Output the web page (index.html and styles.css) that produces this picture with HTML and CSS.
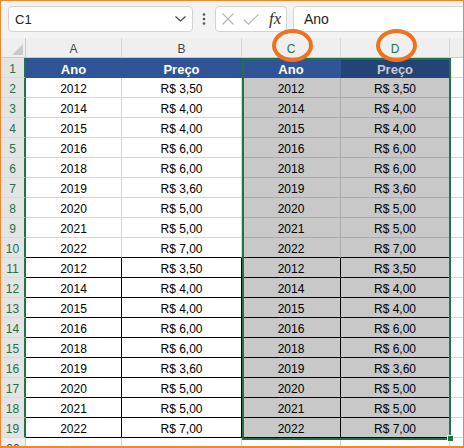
FILE: index.html
```html
<!DOCTYPE html>
<html lang="pt">
<head>
<meta charset="utf-8">
<title>Planilha</title>
<link rel="stylesheet" href="styles.css">
</head>
<body>
<div class="app">
  <div class="fbar">
    <div class="namebox">
      <span class="ref">C1</span>
      <svg class="chev" width="11" height="6" viewBox="0 0 11 6"><path d="M0.5 0.5 L5.5 5 L10.5 0.5" fill="none" stroke="#444" stroke-width="1.2"/></svg>
    </div>
    <div class="dots">
      <svg width="4" height="12" viewBox="0 0 4 12"><circle cx="2" cy="1.5" r="1.3" fill="#555"/><circle cx="2" cy="6" r="1.3" fill="#555"/><circle cx="2" cy="10.5" r="1.3" fill="#555"/></svg>
    </div>
    <div class="fxbox">
      <svg class="ico" width="14" height="12" viewBox="0 0 14 12"><path d="M1.5 0.5 L12.5 11.5 M12.5 0.5 L1.5 11.5" stroke="#b4b4b4" stroke-width="1.1" fill="none"/></svg>
      <svg class="ico" width="16" height="11" viewBox="0 0 16 11"><path d="M0.8 5.5 L5.5 10.2 L15.3 0.6" stroke="#b4b4b4" stroke-width="1.1" fill="none"/></svg>
      <span class="fx">fx</span>
    </div>
    <div class="formula">Ano</div>
  </div>

  <div class="sheet">
    <div class="grid">
      <div class="corner"><svg width="11" height="11" viewBox="0 0 11 11"><path d="M11 0 L11 11 L0 11 Z" fill="#c9c9c9"/></svg></div>
      <div class="ch">A</div><div class="ch">B</div><div class="ch on">C</div><div class="ch on">D</div><div class="ch last"></div>

      <div class="rh on">1</div><div class="c h">Ano</div><div class="c h">Preço</div><div class="c h">Ano</div><div class="c h hs">Preço</div><div class="c e"></div>

      <div class="rh on">2</div><div class="c">2012</div><div class="c">R$ 3,50</div><div class="c s">2012</div><div class="c s">R$ 3,50</div><div class="c e"></div>
      <div class="rh on">3</div><div class="c">2014</div><div class="c">R$ 4,00</div><div class="c s">2014</div><div class="c s">R$ 4,00</div><div class="c e"></div>
      <div class="rh on">4</div><div class="c">2015</div><div class="c">R$ 4,00</div><div class="c s">2015</div><div class="c s">R$ 4,00</div><div class="c e"></div>
      <div class="rh on">5</div><div class="c">2016</div><div class="c">R$ 6,00</div><div class="c s">2016</div><div class="c s">R$ 6,00</div><div class="c e"></div>
      <div class="rh on">6</div><div class="c">2018</div><div class="c">R$ 6,00</div><div class="c s">2018</div><div class="c s">R$ 6,00</div><div class="c e"></div>
      <div class="rh on">7</div><div class="c">2019</div><div class="c">R$ 3,60</div><div class="c s">2019</div><div class="c s">R$ 3,60</div><div class="c e"></div>
      <div class="rh on">8</div><div class="c">2020</div><div class="c">R$ 5,00</div><div class="c s">2020</div><div class="c s">R$ 5,00</div><div class="c e"></div>
      <div class="rh on">9</div><div class="c">2021</div><div class="c">R$ 5,00</div><div class="c s">2021</div><div class="c s">R$ 5,00</div><div class="c e"></div>
      <div class="rh on">10</div><div class="c bb">2022</div><div class="c bb">R$ 7,00</div><div class="c s bb">2022</div><div class="c s bb">R$ 7,00</div><div class="c e"></div>

      <div class="rh on">11</div><div class="c bb br">2012</div><div class="c bb br">R$ 3,50</div><div class="c s bb br">2012</div><div class="c s bb">R$ 3,50</div><div class="c e"></div>
      <div class="rh on">12</div><div class="c bb br">2014</div><div class="c bb br">R$ 4,00</div><div class="c s bb br">2014</div><div class="c s bb">R$ 4,00</div><div class="c e"></div>
      <div class="rh on">13</div><div class="c bb br">2015</div><div class="c bb br">R$ 4,00</div><div class="c s bb br">2015</div><div class="c s bb">R$ 4,00</div><div class="c e"></div>
      <div class="rh on">14</div><div class="c bb br">2016</div><div class="c bb br">R$ 6,00</div><div class="c s bb br">2016</div><div class="c s bb">R$ 6,00</div><div class="c e"></div>
      <div class="rh on">15</div><div class="c bb br">2018</div><div class="c bb br">R$ 6,00</div><div class="c s bb br">2018</div><div class="c s bb">R$ 6,00</div><div class="c e"></div>
      <div class="rh on">16</div><div class="c bb br">2019</div><div class="c bb br">R$ 3,60</div><div class="c s bb br">2019</div><div class="c s bb">R$ 3,60</div><div class="c e"></div>
      <div class="rh on">17</div><div class="c bb br">2020</div><div class="c bb br">R$ 5,00</div><div class="c s bb br">2020</div><div class="c s bb">R$ 5,00</div><div class="c e"></div>
      <div class="rh on">18</div><div class="c bb br">2021</div><div class="c bb br">R$ 5,00</div><div class="c s bb br">2021</div><div class="c s bb">R$ 5,00</div><div class="c e"></div>
      <div class="rh on">19</div><div class="c bb br">2022</div><div class="c bb br">R$ 7,00</div><div class="c s bb br">2022</div><div class="c s bb">R$ 7,00</div><div class="c e"></div>

      <div class="rh">20</div><div class="c"></div><div class="c"></div><div class="c"></div><div class="c"></div><div class="c e"></div>
    </div>
    <div class="sel"></div>
    <div class="handle"></div>
  </div>

  <div class="ring ring-c"></div>
  <div class="ring ring-d"></div>
</div>
</body>
</html>
```

FILE: styles.css
```css
* { box-sizing: border-box; }

html, body {
  margin: 0;
  padding: 0;
  background: #ffffff;
}

.app {
  position: relative;
  width: 464px;
  height: 448px;
  border: 1px solid #f4862a;
  border-bottom-width: 2px;
  overflow: hidden;
  font-family: "Liberation Sans", Arial, sans-serif;
  background: #ffffff;
}

/* formula bar */
.fbar {
  height: 37px;
  background: #f3f3f3;
  display: flex;
  align-items: flex-start;
  padding: 5px 0 0 7px;
}

.namebox {
  width: 185px;
  height: 26px;
  background: #ffffff;
  border: 1px solid #d3d3d3;
  border-radius: 4px;
  display: flex;
  align-items: center;
  justify-content: space-between;
  padding: 0 6px 0 6px;
}

.ref {
  font-size: 13px;
  color: #222;
}

.chev { margin-right: 0; }

.dots {
  width: 22px;
  height: 26px;
  display: flex;
  align-items: center;
  justify-content: center;
}

.fxbox {
  width: 72px;
  height: 26px;
  background: #ffffff;
  border: 1px solid #d3d3d3;
  border-radius: 4px;
  display: flex;
  align-items: center;
  padding-left: 5px;
  gap: 8px;
}

.fx {
  font-family: "Liberation Serif", "Times New Roman", serif;
  font-style: italic;
  font-size: 17px;
  color: #333;
  margin-left: 2px;
}

.formula {
  flex: 1;
  height: 26px;
  margin-left: 6px;
  margin-right: -6px;
  background: #ffffff;
  border: 1px solid #d3d3d3;
  border-radius: 4px;
  font-size: 14px;
  color: #222;
  padding-left: 10px;
  line-height: 24px;
}

/* sheet */
.sheet {
  position: relative;
  height: 408px;
  overflow: hidden;
}

.grid {
  display: grid;
  grid-template-columns: 25px 96px 120px 99px 109px 1fr;
  grid-auto-rows: 20px;
  font-size: 12px;
}

.grid > div {
  border-right: 1px solid #d4d4d4;
  border-bottom: 1px solid #d4d4d4;
  text-align: center;
  line-height: 15px;
  padding-top: 4px;
  white-space: nowrap;
  overflow: hidden;
}

.grid > .corner {
  background: #efefef;
  border-right: 1px solid #c9c9c9;
  border-bottom: 1px solid #c9c9c9;
  display: flex;
  align-items: flex-end;
  justify-content: flex-end;
  padding: 0 2px 2px 0;
}

.grid > .ch {
  background: #efefef;
  color: #444;
  border-right-color: #d9d9d9;
  border-bottom-color: #c9c9c9;
  font-size: 12px;
}

.grid > .ch.on {
  color: #217346;
}

.grid > .ch.last { border-right: none; }

.grid > .rh {
  background: #efefef;
  color: #444;
  border-right-color: #c9c9c9;
  border-bottom-color: #d9d9d9;
}

.grid > .rh.on {
  background: #e4e4e4;
  color: #217346;
  border-right: 2px solid #217346;
}

.grid > .c { color: #000; }

.grid > .e { border-right: none; }

.grid > .h {
  background: #2f5597;
  border-right-color: #2f5597;
  border-bottom-color: #2f5597;
  color: #ffffff;
  font-weight: bold;
  font-size: 13px;
}

.grid > .h.hs {
  background: #244478;
  border-right-color: #244478;
  border-bottom-color: #244478;
  color: #c9c9cf;
}

.grid > .s {
  background: #c8c8c8;
  border-right-color: #ababab;
  border-bottom-color: #ababab;
}

.grid > .bb { border-bottom-color: #000; }
.grid > .br { border-right-color: #000; }

/* selection overlay */
.sel {
  position: absolute;
  left: 241px;
  top: 20px;
  width: 209px;
  height: 382px;
  border: 2px solid #217346;
}

.handle {
  position: absolute;
  left: 446px;
  top: 397px;
  width: 7px;
  height: 7px;
  background: #217346;
  border: 1px solid #ffffff;
}

/* annotation rings */
.ring {
  position: absolute;
  top: 28px;
  width: 41px;
  height: 33px;
  border: 4px solid #f1711f;
  border-radius: 50%;
}

.ring-c { left: 271px; }
.ring-d { left: 375px; }
```
